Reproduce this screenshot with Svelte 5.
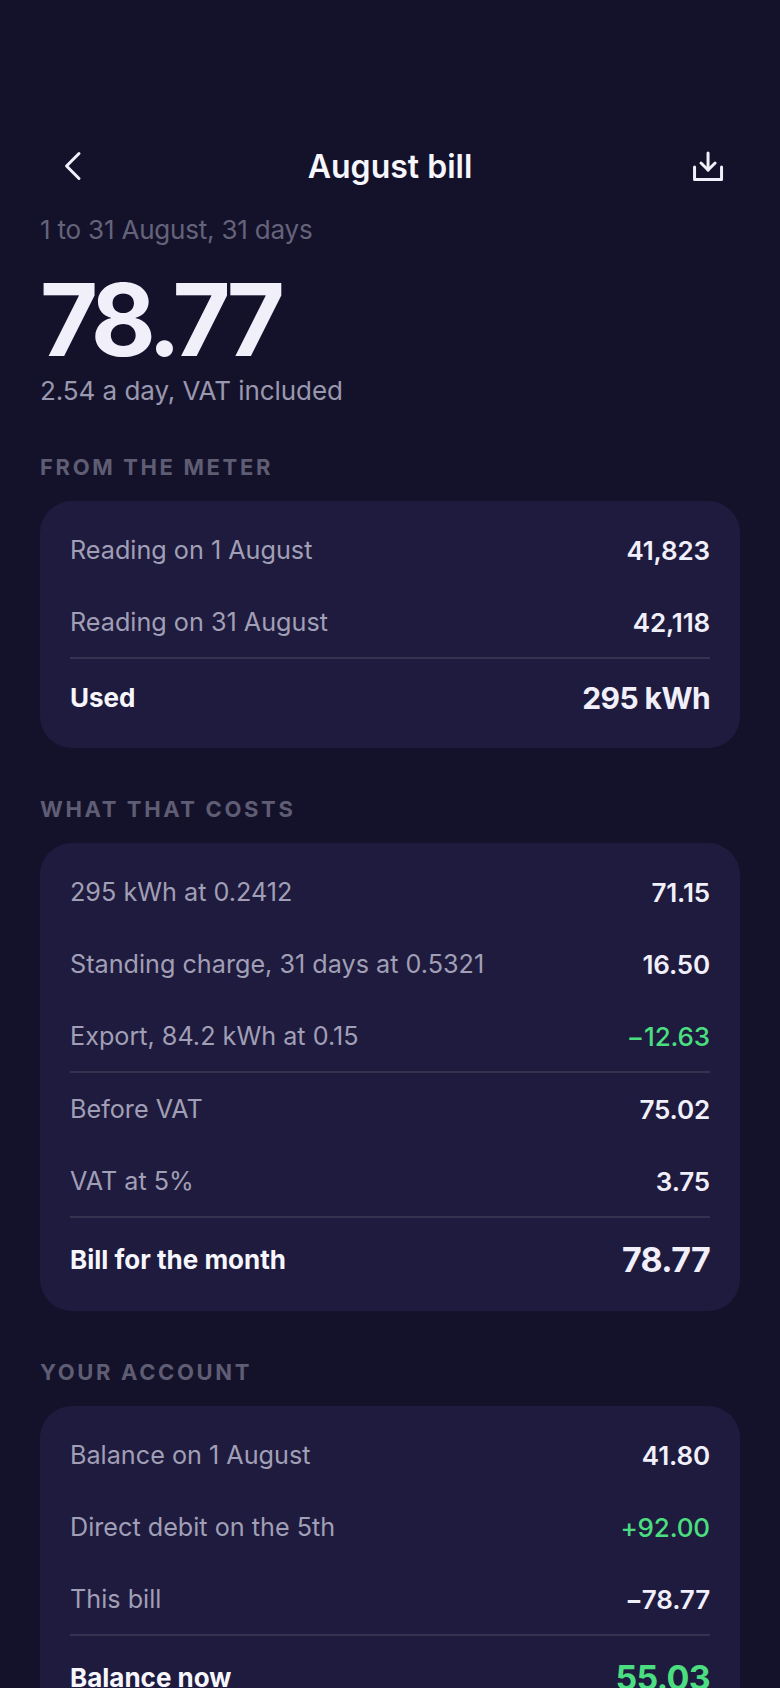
<script>
  const sections = [
    {
      title: 'From the meter',
      rows: [
        { label: 'Reading on 1 August', value: '41,823' },
        { label: 'Reading on 31 August', value: '42,118' },
        { label: 'Used', value: '295 kWh', total: true, rule: true }
      ]
    },
    {
      title: 'What that costs',
      rows: [
        { label: '295 kWh at 0.2412', value: '71.15' },
        { label: 'Standing charge, 31 days at 0.5321', value: '16.50' },
        { label: 'Export, 84.2 kWh at 0.15', value: '−12.63', good: true },
        { label: 'Before VAT', value: '75.02', rule: true },
        { label: 'VAT at 5%', value: '3.75' },
        { label: 'Bill for the month', value: '78.77', total: true, big: true, rule: true }
      ]
    },
    {
      title: 'Your account',
      rows: [
        { label: 'Balance on 1 August', value: '41.80' },
        { label: 'Direct debit on the 5th', value: '+92.00', good: true },
        { label: 'This bill', value: '−78.77' },
        { label: 'Balance now', value: '55.03', total: true, big: true, good: true, rule: true }
      ]
    }
  ];
</script>

<div class="page">
  <header class="top">
    <button class="icon" aria-label="Back">
      <svg viewBox="0 0 24 24" width="36" height="36" fill="none" stroke="currentColor" stroke-width="2" stroke-linecap="round" stroke-linejoin="round">
        <path d="M18 3.700 9.700 12l8.300 8.300" />
      </svg>
    </button>
    <h1>August bill</h1>
    <button class="icon" aria-label="Download">
      <svg viewBox="0 0 24 24" width="36" height="36" fill="none" stroke="currentColor" stroke-width="2" stroke-linecap="round" stroke-linejoin="round">
        <path d="M10.700 3.300v11.400" />
        <path d="m6 10 4.700 4.700 4.700-4.700" />
        <path d="M1.700 12.700V21h18v-8.300" />
      </svg>
    </button>
  </header>

  <p class="period">1 to 31 August, 31 days</p>
  <p class="amount">78.77</p>
  <p class="rate">2.54 a day, VAT included</p>

  {#each sections as section}
    <section>
      <h2>{section.title}</h2>
      <div class="card">
        {#each section.rows as row}
          <div class="row" class:rule={row.rule} class:total={row.total} class:big={row.big}>
            <span class="label">{row.label}</span>
            <span class="value" class:good={row.good}>{row.value}</span>
          </div>
        {/each}
      </div>
    </section>
  {/each}
</div>

<style>
  :global(body) {
    margin: 0;
    background: #14122b;
  }

  .page {
    height: 1688px;
    overflow: hidden;
    box-sizing: border-box;
    padding: 136px 40px 0;
    background: #14122b;
    color: #f1effa;
    font-family: Inter, "Liberation Sans", sans-serif;
  }

  .top {
    display: flex;
    align-items: center;
    justify-content: space-between;
    height: 60px;
    padding: 0 8px;
  }

  .icon {
    display: flex;
    align-items: center;
    justify-content: center;
    width: 44px;
    height: 44px;
    padding: 0;
    border: 0;
    background: none;
    color: #f1effa;
  }

  h1 {
    margin: 0;
    font-size: 32px;
    font-weight: 600;
    color: #f7f6fd;
  }

  .period {
    margin: 17px 0 0;
    font-size: 26px;
    line-height: 34px;
    letter-spacing: -0.2px;
    color: #65637a;
  }

  .amount {
    margin: 23px 0 0;
    font-size: 100px;
    line-height: 100px;
    font-weight: 700;
    letter-spacing: -0.06em;
  }

  .rate {
    margin: 4px 0 0;
    font-size: 26px;
    line-height: 34px;
    letter-spacing: -0.06px;
    color: #9a98ae;
  }

  section {
    margin-top: 45px;
  }

  h2 {
    margin: 0 0 20px;
    font-size: 22px;
    line-height: 28px;
    font-weight: 700;
    letter-spacing: 0.12em;
    text-transform: uppercase;
    color: #5f5d73;
  }

  section + section {
    margin-top: 47px;
  }

  .card {
    padding: 13px 30px 14px;
    border-radius: 32px;
    background: #1e1b3e;
  }

  .row {
    display: flex;
    align-items: center;
    justify-content: space-between;
    height: 72px;
    font-size: 25.2px;
  }

  .row.rule {
    margin-top: -1px;
    border-top: 2px solid #35324f;
  }

  .row.total {
    height: 73px;
    padding-top: 2px;
  }

  .row.total.big {
    height: 76px;
    padding-top: 3px;
  }

  .label {
    color: #a19fb5;
  }

  .value {
    font-size: 26px;
    font-weight: 600;
    letter-spacing: -0.15px;
  }

  .total .label {
    font-size: 26px;
    font-weight: 700;
    color: #f7f6fd;
  }

  .total .value {
    font-size: 30px;
    font-weight: 700;
    letter-spacing: -0.02em;
  }

  .total.big .value {
    font-size: 34px;
  }

  .value.good {
    font-weight: 500;
    color: #4ade80;
  }

  .total .value.good {
    font-weight: 700;
  }
</style>
